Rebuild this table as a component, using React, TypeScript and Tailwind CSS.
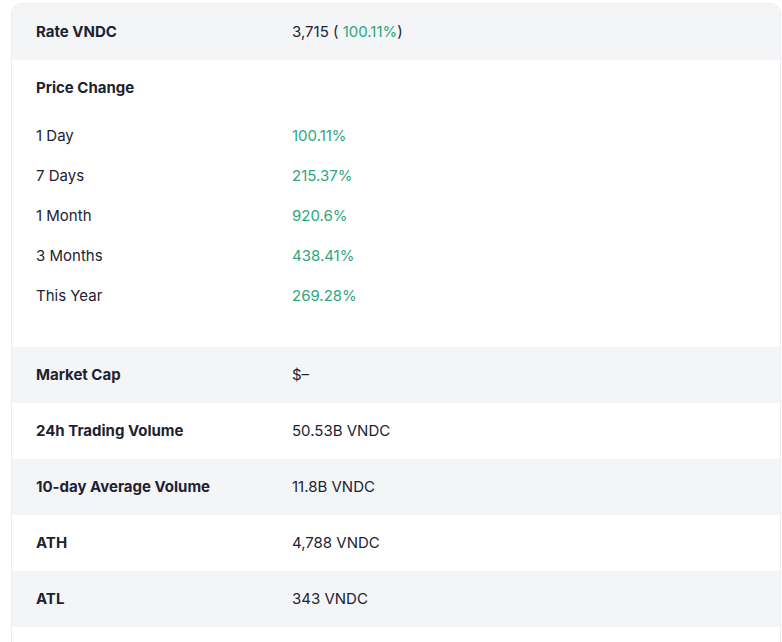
const PRICE_CHANGES = [
  { label: '1 Day', value: '100.11%' },
  { label: '7 Days', value: '215.37%' },
  { label: '1 Month', value: '920.6%' },
  { label: '3 Months', value: '438.41%' },
  { label: 'This Year', value: '269.28%' },
]

const STATS = [
  { label: 'Market Cap', value: '$–', shaded: true },
  { label: '24h Trading Volume', value: '50.53B VNDC', shaded: false },
  { label: '10-day Average Volume', value: '11.8B VNDC', shaded: true },
  { label: 'ATH', value: '4,788 VNDC', shaded: false },
  { label: 'ATL', value: '343 VNDC', shaded: true },
]

function Row({ label, children, shaded }: { label: string; children: React.ReactNode; shaded?: boolean }) {
  return (
    <div className={`flex h-[56px] items-center px-6 pt-[1px] ${shaded ? 'bg-[#f4f5f7]' : 'bg-white'}`}>
      <div className="w-[256px] font-bold">{label}</div>
      <div>{children}</div>
    </div>
  )
}

export default function App() {
  return (
    <div
      className="h-[642px] overflow-hidden bg-white pl-[11px] pt-[3px] text-[15px] text-[#1d2330]"
      style={{ fontFamily: 'Inter, "Noto Sans", sans-serif' }}
    >
      <div className="w-[770px] h-[700px] overflow-hidden rounded-[10px] border border-[#eceef1] bg-white">
        {/* Rate */}
        <Row label="Rate VNDC" shaded>
          3,715 ( <span className="text-[#2fa67c]">100.11%</span>)
        </Row>

        {/* Price change */}
        <div className="px-6 pt-[17px] pb-[31px]">
          <div className="h-[22px] font-bold leading-[22px]">Price Change</div>
          <div className="mt-[17px] flex flex-col">
            {PRICE_CHANGES.map((p) => (
              <div key={p.label} className="flex h-[40px] items-center">
                <div className="w-[256px]">{p.label}</div>
                <div className="text-[#2fa67c]">{p.value}</div>
              </div>
            ))}
          </div>
        </div>

        {/* Stats */}
        {STATS.map((s) => (
          <Row key={s.label} label={s.label} shaded={s.shaded}>
            {s.value}
          </Row>
        ))}
      </div>
    </div>
  )
}
